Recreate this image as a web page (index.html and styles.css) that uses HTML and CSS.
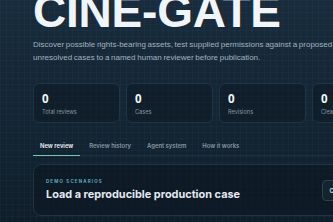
FILE: index.html
```html
<!DOCTYPE html>
<html lang="en">
<head>
    <meta charset="UTF-8">
    <meta name="viewport" content="width=device-width, initial-scale=1.0">
    <title>Cine-Gate</title>
    <link rel="stylesheet" href="styles.css">
</head>
<body>
    <div class="page">
        <!-- Hero -->
        <header class="hero">
            <h1>CINE-GATE</h1>
            <p>Discover possible rights-bearing assets, test supplied permissions against a proposed release, and route unresolved cases to a named human reviewer before publication.</p>
        </header>

        <!-- Stats -->
        <section class="stats">
            <div class="stat-card">
                <strong>0</strong>
                <span>Total reviews</span>
            </div>
            <div class="stat-card">
                <strong>0</strong>
                <span>Cases</span>
            </div>
            <div class="stat-card">
                <strong>0</strong>
                <span>Revisions</span>
            </div>
            <div class="stat-card">
                <strong>0</strong>
                <span>Cleared</span>
            </div>
        </section>

        <!-- Tabs -->
        <nav class="tabs">
            <a class="tab active" href="#">New review</a>
            <a class="tab" href="#">Review history</a>
            <a class="tab" href="#">Agent system</a>
            <a class="tab" href="#">How it works</a>
        </nav>

        <!-- Demo scenarios -->
        <section class="panel">
            <div class="panel-text">
                <div class="eyebrow">DEMO SCENARIOS</div>
                <h2>Load a reproducible production case</h2>
            </div>
            <button class="btn">Clear</button>
        </section>
    </div>
</body>
</html>
```

FILE: styles.css
```css
* {
    margin: 0;
    padding: 0;
    box-sizing: border-box;
    font-family: "Liberation Sans", Arial, sans-serif;
}

body {
    background-color: #12222f;
    background-image:
        linear-gradient(rgba(120, 170, 200, 0.035) 1px, transparent 1px),
        linear-gradient(90deg, rgba(120, 170, 200, 0.035) 1px, transparent 1px),
        linear-gradient(180deg, #182c3d 0%, #101e2a 100%);
    background-size: 6px 6px, 6px 6px, 100% 100%;
    color: #e8eef3;
    min-height: 222px;
    overflow: hidden;
}

.page {
    width: 366px;
    padding-left: 33px;
}

.hero h1 {
    font-size: 46px;
    font-weight: 700;
    line-height: 1;
    letter-spacing: -0.2px;
    color: #f2f5f8;
    margin-top: -12px;
}

.hero p {
    margin-top: 5px;
    font-size: 8px;
    line-height: 12.5px;
    word-spacing: -0.5px;
    color: #a4b3c0;
    width: 385px;
}

.stats {
    display: flex;
    gap: 6px;
    margin-top: 19px;
}

.stat-card {
    flex: 0 0 87px;
    height: 40px;
    border: 1px solid #1f3444;
    border-radius: 6px;
    background: rgba(10, 22, 32, 0.45);
    padding: 9px 8px 0;
    display: flex;
    flex-direction: column;
}

.stat-card strong {
    font-family: "Open Sans", sans-serif;
    font-size: 11.5px;
    line-height: 12px;
    font-weight: 700;
    color: #f3f6f8;
}

.stat-card span {
    font-family: "Inter", sans-serif;
    font-size: 5.6px;
    margin-top: 4px;
    color: #8495a3;
}

.tabs {
    display: flex;
    margin-top: 14px;
    border-bottom: 1px solid #1d3040;
}

.tab {
    font-family: "Inter", sans-serif;
    font-size: 5.9px;
    font-weight: 600;
    color: #8897a4;
    text-decoration: none;
    padding: 5px 7px 6px;
    margin-right: 2px;
    border-bottom: 1px solid transparent;
    margin-bottom: -1px;
}

.tab.active {
    color: #eef3f6;
    border-bottom-color: #72c6b6;
}

.panel {
    margin-top: 8px;
    height: 52px;
    border: 1px solid #1f3444;
    border-radius: 8px;
    background: rgba(10, 20, 30, 0.5);
    padding: 0 12px;
    display: flex;
    justify-content: space-between;
    align-items: center;
}

.eyebrow {
    font-family: "Inter", sans-serif;
    font-size: 4.4px;
    font-weight: 700;
    letter-spacing: 1.2px;
    color: #5fa9bd;
}

.panel h2 {
    font-family: "Inter", sans-serif;
    font-size: 10.9px;
    font-weight: 700;
    color: #e3e9ee;
    margin-top: 3px;
}

.btn {
    font-family: "Inter", sans-serif;
    font-size: 6px;
    font-weight: 600;
    color: #d7e0e6;
    background: #13242f;
    border: 1px solid #2a4150;
    border-radius: 4px;
    padding: 6px 7px;
}
```
